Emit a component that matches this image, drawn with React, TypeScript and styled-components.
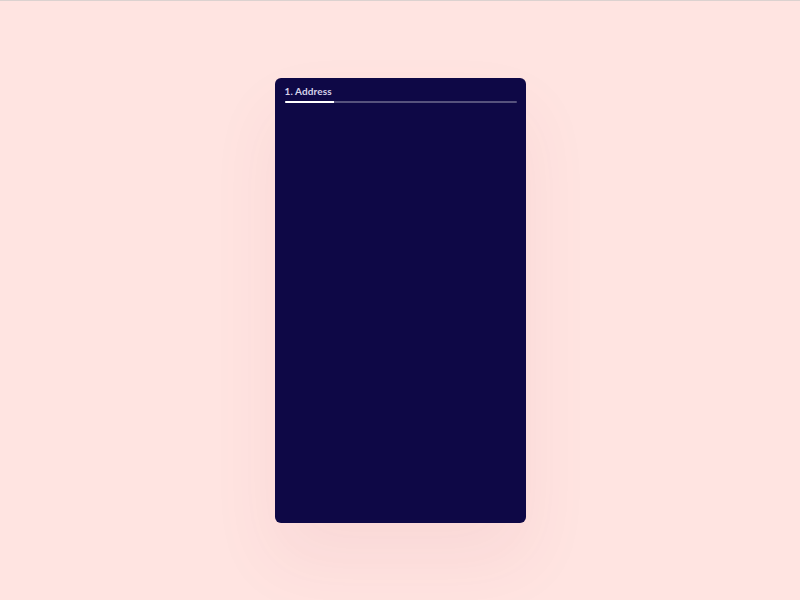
import React from 'react'
import styled, { createGlobalStyle } from 'styled-components'

const GlobalStyle = createGlobalStyle`
  html, body {
    margin: 0;
    padding: 0;
  }
  body {
    background: #ffe4e1;
    font-family: Lato, "Open Sans", sans-serif;
    border-top: 1px solid #dcd2d0;
    box-sizing: border-box;
  }
`

const Page = styled.main`
  height: 599px;
  display: flex;
  align-items: center;
  justify-content: center;
`

const Card = styled.section`
  width: 251px;
  height: 445px;
  box-sizing: border-box;
  padding: 7px 9px 0 10px;
  margin-top: -1px;
  background: #0e0846;
  border-radius: 6px;
  box-shadow: 0 36px 70px rgba(170, 60, 80, 0.07);
`

const StepHeader = styled.header`
  display: flex;
  flex-direction: column;
  gap: 3px;
`

const StepLabel = styled.span`
  font-size: 10px;
  font-weight: 700;
  line-height: 13px;
  color: #d6d3ea;
  letter-spacing: 0.1px;
`

const Track = styled.div`
  height: 2px;
  background: rgba(255, 255, 255, 0.3);
  border-radius: 1px;
  overflow: hidden;
`

const Fill = styled.div<{ $pct: number }>`
  height: 100%;
  width: ${(p) => p.$pct}%;
  background: #ffffff;
`

const App = () => {
  return (
    <>
      <GlobalStyle />
      <Page>
        <Card>
          <StepHeader>
            <StepLabel>1. Address</StepLabel>
            <Track>
              <Fill $pct={21.5} />
            </Track>
          </StepHeader>
        </Card>
      </Page>
    </>
  )
}

export default App
